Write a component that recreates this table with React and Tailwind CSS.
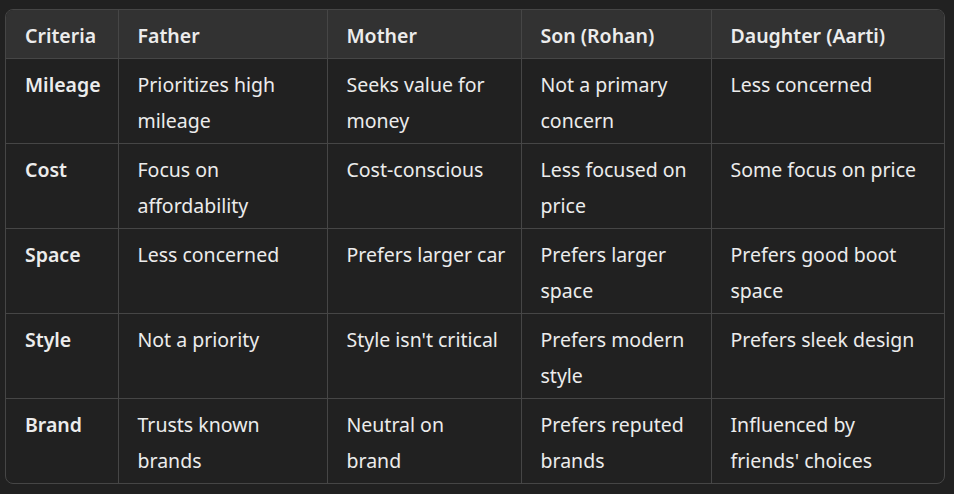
const headers = ["Criteria", "Father", "Mother", "Son (Rohan)", "Daughter (Aarti)"];

// each cell is split into the lines it shows in the screenshot
const rows = [
  [["Mileage"], ["Prioritizes high", "mileage"], ["Seeks value for", "money"], ["Not a primary", "concern"], ["Less concerned"]],
  [["Cost"], ["Focus on", "affordability"], ["Cost-conscious"], ["Less focused on", "price"], ["Some focus on price"]],
  [["Space"], ["Less concerned"], ["Prefers larger car"], ["Prefers larger", "space"], ["Prefers good boot", "space"]],
  [["Style"], ["Not a priority"], ["Style isn't critical"], ["Prefers modern", "style"], ["Prefers sleek design"]],
  [["Brand"], ["Trusts known", "brands"], ["Neutral on", "brand"], ["Prefers reputed", "brands"], ["Influenced by", "friends' choices"]],
];

const widths = ["w-[112px]", "w-[209px]", "w-[194px]", "w-[190px]", "w-[233px]"];

export default function App() {
  return (
    <div
      className="w-[954px] h-[494px] bg-[#212121] pt-[9px] pl-[5px] text-[#ececec]"
      style={{ fontFamily: '"Segoe UI", "Noto Sans", sans-serif' }}
    >
      <div className="w-[940px] border border-[#464646] rounded-[8px] overflow-hidden">
        <table className="w-full table-fixed border-collapse text-[19.5px] leading-[36px]">
          <colgroup>
            {widths.map((w, i) => (
              <col key={i} className={w} />
            ))}
          </colgroup>
          <thead>
            <tr className="bg-[#323232]">
              {headers.map((h, i) => (
                <th
                  key={h}
                  className={`text-left font-semibold whitespace-nowrap pl-[19px] pr-[10px] pt-[8px] pb-[4px] border-b border-[#464646] ${
                    i < headers.length - 1 ? "border-r" : ""
                  }`}
                >
                  {h}
                </th>
              ))}
            </tr>
          </thead>
          <tbody>
            {rows.map((row, r) => (
              <tr key={row[0][0]}>
                {row.map((lines, i) => (
                  <td
                    key={i}
                    className={`align-top whitespace-nowrap pl-[19px] pr-[10px] pt-[8px] pb-[4px] h-[84px] border-[#464646] ${
                      i === 0 ? "font-semibold" : ""
                    } ${i < row.length - 1 ? "border-r" : ""} ${
                      r < rows.length - 1 ? "border-b" : ""
                    }`}
                  >
                    {lines.map((l) => (
                      <div key={l}>{l}</div>
                    ))}
                  </td>
                ))}
              </tr>
            ))}
          </tbody>
        </table>
      </div>
    </div>
  );
}
